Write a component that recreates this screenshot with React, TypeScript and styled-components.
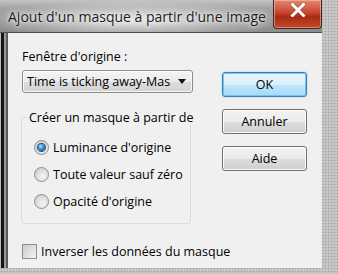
import React from "react";
import styled, { createGlobalStyle } from "styled-components";

const Global = createGlobalStyle`
  html, body { margin: 0; padding: 0; }
  body {
    width: 338px; height: 274px; overflow: hidden;
    font-family: "Open Sans", "Noto Sans", sans-serif;
  }
`;

const Desktop = styled.div`
  width: 338px;
  height: 274px;
  background-color: #c8c8c8;
  background-image: radial-gradient(circle, #a6a6a6 0.8px, transparent 1.1px);
  background-size: 3px 3px;
  display: flex;
  align-items: flex-start;
`;

const Window = styled.div`
  width: 322px;
  height: 268px;
  display: flex;
  flex-direction: column;
`;

const TitleBar = styled.div`
  height: 32px;
  flex: none;
  display: flex;
  align-items: flex-start;
  justify-content: space-between;
  background:
    radial-gradient(ellipse 150px 20px at 135px 20px, rgba(236, 236, 236, 0.95), rgba(236, 236, 236, 0) 100%),
    linear-gradient(to bottom, #c4c4c4 0, #a4a4a4 25%, #8c8c8c 100%);
  border-bottom: 1px solid #4e4e4e;
`;

const Title = styled.span`
  font-size: 14px;
  line-height: 20px;
  color: #1c1c1c;
  padding: 7px 0 0 8px;
  white-space: nowrap;
  text-shadow: 0 0 6px #f2f2f2, 0 0 3px #f2f2f2;
`;

const CloseButton = styled.div`
  width: 49px;
  height: 29px;
  box-sizing: border-box;
  border: 1px solid #3a2a2a;
  border-top: none;
  border-radius: 0 0 4px 4px;
  background: linear-gradient(to bottom, #e28a76 0, #c7462c 45%, #a82a14 60%, #c24a2a 100%);
  box-shadow: inset 0 0 0 1px rgba(255, 200, 180, 0.5);
  display: flex;
  justify-content: center;
  align-items: flex-start;
  padding-top: 3px;
`;

const Body = styled.div`
  flex: 1;
  display: flex;
  min-height: 0;
`;

const Frame = styled.div`
  width: 8px;
  flex: none;
  background: linear-gradient(
    to right,
    #bcbcbc 0,
    #bcbcbc 1px,
    #151515 1px,
    #151515 4px,
    #9a9a9a 4px,
    #9a9a9a 6px,
    #5c5c5c 6px,
    #5c5c5c 8px
  );
`;

const Content = styled.div`
  flex: 1;
  background: #f0f0f0;
  display: grid;
  grid-template-columns: 171px 85px;
  column-gap: 29px;
  align-items: start;
  padding: 15px 0 0 14px;
  font-size: 12.5px;
  color: #000;
`;

const LeftColumn = styled.div`
  display: flex;
  flex-direction: column;
`;

const FieldLabel = styled.div`
  line-height: 17px;
  white-space: nowrap;
`;

const Select = styled.div`
  margin-top: 5px;
  height: 23px;
  box-sizing: border-box;
  border: 1px solid #8c8c8c;
  border-radius: 3px;
  background: linear-gradient(to bottom, #f4f4f4 0, #ebebeb 50%, #dddddd 51%, #d3d3d3 100%);
  box-shadow: inset 0 0 0 1px rgba(255, 255, 255, 0.8);
  display: flex;
  align-items: center;
  justify-content: space-between;
  padding: 0 6px 0 4px;
  white-space: nowrap;
  overflow: hidden;
`;

const Arrow = styled.span`
  width: 0;
  height: 0;
  border-left: 4.5px solid transparent;
  border-right: 4.5px solid transparent;
  border-top: 5px solid #111;
  flex: none;
`;

const Group = styled.fieldset`
  margin: 17px 0 0 -1px;
  width: 170px;
  min-width: 0;
  box-sizing: border-box;
  border: 1px solid #d8dde2;
  border-radius: 3px;
  padding: 9px 0 8px 0;
  display: flex;
  flex-direction: column;
`;

const Legend = styled.legend`
  padding: 0 2px 0 2px;
  margin-left: 5px;
  line-height: 15px;
  white-space: nowrap;
`;

const OptionRow = styled.div`
  height: 27px;
  display: flex;
  align-items: center;
  gap: 4px;
  padding-left: 12px;
  white-space: nowrap;
`;

const Radio = styled.span<{ $checked?: boolean }>`
  width: 15px;
  height: 15px;
  box-sizing: border-box;
  border-radius: 50%;
  border: 1px solid #8a8f94;
  background: radial-gradient(circle at 60% 65%, #f6f6f6 0, #dcdcdc 55%, #bdbdbd 100%);
  display: flex;
  align-items: center;
  justify-content: center;
  flex: none;
  &::after {
    content: "";
    display: ${(p) => (p.$checked ? "block" : "none")};
    width: 7px;
    height: 7px;
    border-radius: 50%;
    background: radial-gradient(circle at 40% 35%, #a9e3ff 0, #2d8ed0 45%, #0b3f74 100%);
    box-shadow: 0 0 0 1px #2a4f70;
  }
`;

const CheckRow = styled.div`
  margin-top: 19px;
  display: flex;
  align-items: center;
  gap: 4px;
  white-space: nowrap;
`;

const Checkbox = styled.span`
  width: 15px;
  height: 15px;
  box-sizing: border-box;
  border: 1px solid #8e8f8f;
  background: linear-gradient(135deg, #cbcbcb 0, #f4f4f4 100%);
  flex: none;
`;

const ButtonColumn = styled.div`
  display: flex;
  flex-direction: column;
  gap: 12px;
  padding-top: 24px;
`;

const Button = styled.div<{ $default?: boolean }>`
  height: 25px;
  box-sizing: border-box;
  border-radius: 3px;
  display: flex;
  align-items: center;
  justify-content: center;
  border: 1px solid ${(p) => (p.$default ? "#3c7fb1" : "#707070")};
  background: ${(p) =>
    p.$default
      ? "linear-gradient(to bottom, #eaf6fd 0, #d9f0fc 50%, #bee6fd 51%, #a7d9f5 100%)"
      : "linear-gradient(to bottom, #f2f2f2 0, #ebebeb 50%, #dddddd 51%, #cfcfcf 100%)"};
  box-shadow: ${(p) =>
    p.$default
      ? "inset 0 0 0 1px #6ec9f0, 0 0 2px rgba(60, 160, 220, 0.5)"
      : "inset 0 0 0 1px rgba(255, 255, 255, 0.85)"};
`;

function CloseIcon() {
  return (
    <svg width="16" height="14" viewBox="0 0 16 14">
      <path
        d="M2 1 L14 13 M14 1 L2 13"
        stroke="#5a1a10"
        strokeWidth="4.2"
        strokeLinecap="square"
        opacity="0.35"
      />
      <path d="M2.5 1.5 L13.5 12.5 M13.5 1.5 L2.5 12.5" stroke="#ffffff" strokeWidth="3" strokeLinecap="square" />
    </svg>
  );
}

export default function App() {
  return (
    <>
      <Global />
      <Desktop>
        <Window>
          <TitleBar>
            <Title>Ajout d'un masque à partir d'une image</Title>
            <CloseButton>
              <CloseIcon />
            </CloseButton>
          </TitleBar>
          <Body>
            <Frame />
            <Content>
              <LeftColumn>
                <FieldLabel>Fenêtre d'origine :</FieldLabel>
                <Select>
                  <span>Time is ticking away-Mas</span>
                  <Arrow />
                </Select>
                <Group>
                  <Legend>Créer un masque à partir de</Legend>
                  <OptionRow>
                    <Radio $checked />
                    Luminance d'origine
                  </OptionRow>
                  <OptionRow>
                    <Radio />
                    Toute valeur sauf zéro
                  </OptionRow>
                  <OptionRow>
                    <Radio />
                    Opacité d'origine
                  </OptionRow>
                </Group>
                <CheckRow>
                  <Checkbox />
                  Inverser les données du masque
                </CheckRow>
              </LeftColumn>
              <ButtonColumn>
                <Button $default>OK</Button>
                <Button>Annuler</Button>
                <Button>Aide</Button>
              </ButtonColumn>
            </Content>
          </Body>
        </Window>
      </Desktop>
    </>
  );
}
